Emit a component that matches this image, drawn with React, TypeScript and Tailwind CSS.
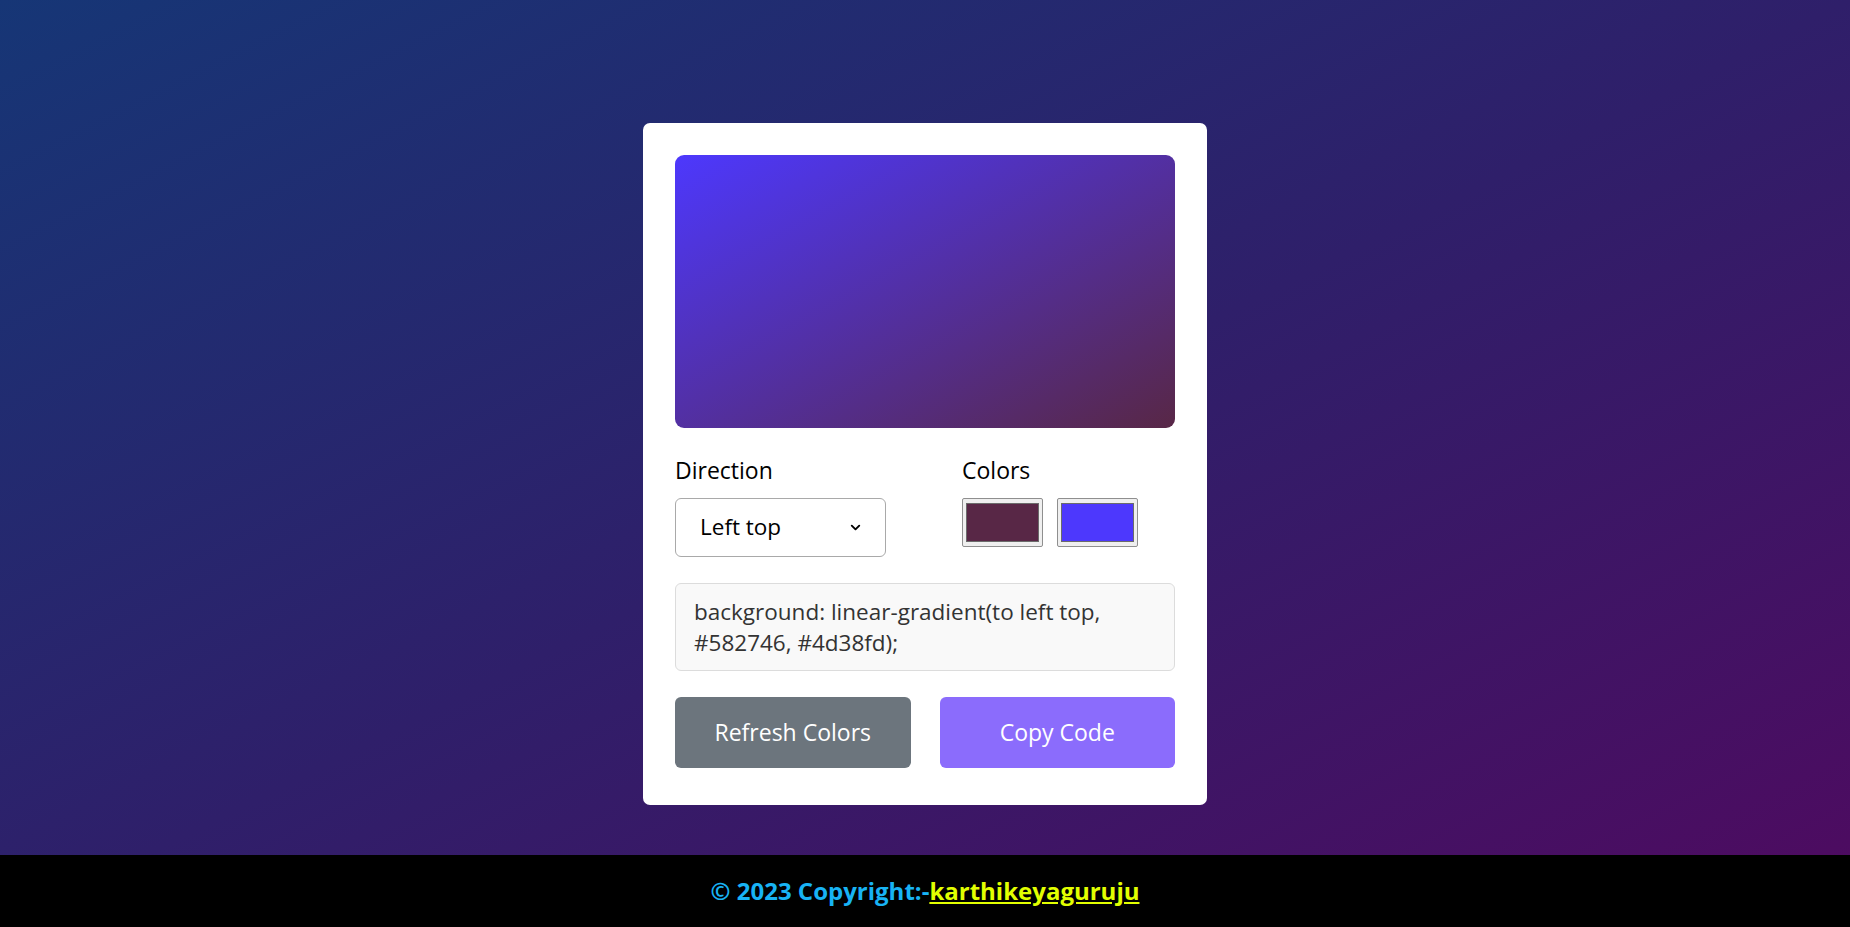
import { ChevronDown } from 'lucide-react';

const font = { fontFamily: '"Open Sans", "Liberation Sans", sans-serif' };

function Swatch({ color }: { color: string }) {
  return (
    <div className="w-[81px] h-[49px] rounded-[2px] border border-[#8f8f8f] bg-[#efefef] px-[3px] py-[4px]">
      <div className={`h-full w-full border border-[#6b6b6b] ${color}`} />
    </div>
  );
}

export default function App() {
  return (
    <div
      style={font}
      className="relative min-h-screen flex items-center justify-center bg-[linear-gradient(to_bottom_right,#163676,#2f1f6a_50%,#4f0a60)]"
    >
      <div className="w-[564px] rounded-[7px] bg-white px-8 pt-8 pb-[37px]">
        <div className="h-[273px] rounded-[9px] bg-[linear-gradient(to_left_top,#582746,#4d38fd)]" />

        <div className="mt-[25px] flex">
          <div className="w-[287px]">
            <div className="text-[23px] leading-[34px] text-black">Direction</div>
            <div className="mt-[11px] flex h-[59px] w-[211px] items-center justify-between rounded-[6px] border border-[#a9a9a9] pl-[24px] pr-[22px]">
              <span className="text-[22.5px] text-black">Left top</span>
              <ChevronDown className="h-[15px] w-[15px] text-black" strokeWidth={3} />
            </div>
          </div>
          <div>
            <div className="text-[23px] leading-[34px] text-black">Colors</div>
            <div className="mt-[11px] flex gap-[14px]">
              <Swatch color="bg-[#582746]" />
              <Swatch color="bg-[#4d38fd]" />
            </div>
          </div>
        </div>

        <div className="mt-[26px] h-[88px] rounded-[6px] border border-[#dcdcdc] bg-[#f9f9f9] px-[18px] pt-[12px] text-[22.5px] leading-[31px] text-[#333]">
          background: linear-gradient(to left top, #582746, #4d38fd);
        </div>

        <div className="mt-[26px] flex gap-[29px]">
          <button className="h-[71px] flex-1 rounded-[6px] bg-[#6c757d] text-[23px] text-white">
            Refresh Colors
          </button>
          <button className="h-[71px] flex-1 rounded-[6px] bg-[#8b6cfc] text-[23px] text-white">
            Copy Code
          </button>
        </div>
      </div>

      <footer className="absolute bottom-0 left-0 right-0 flex h-[72px] items-center justify-center bg-black text-[24px] font-bold">
        <span className="text-[#18b3f4]">© 2023 Copyright:-</span>
        <a href="#" className="text-[#e2ff00] underline">karthikeyaguruju</a>
      </footer>
    </div>
  );
}
